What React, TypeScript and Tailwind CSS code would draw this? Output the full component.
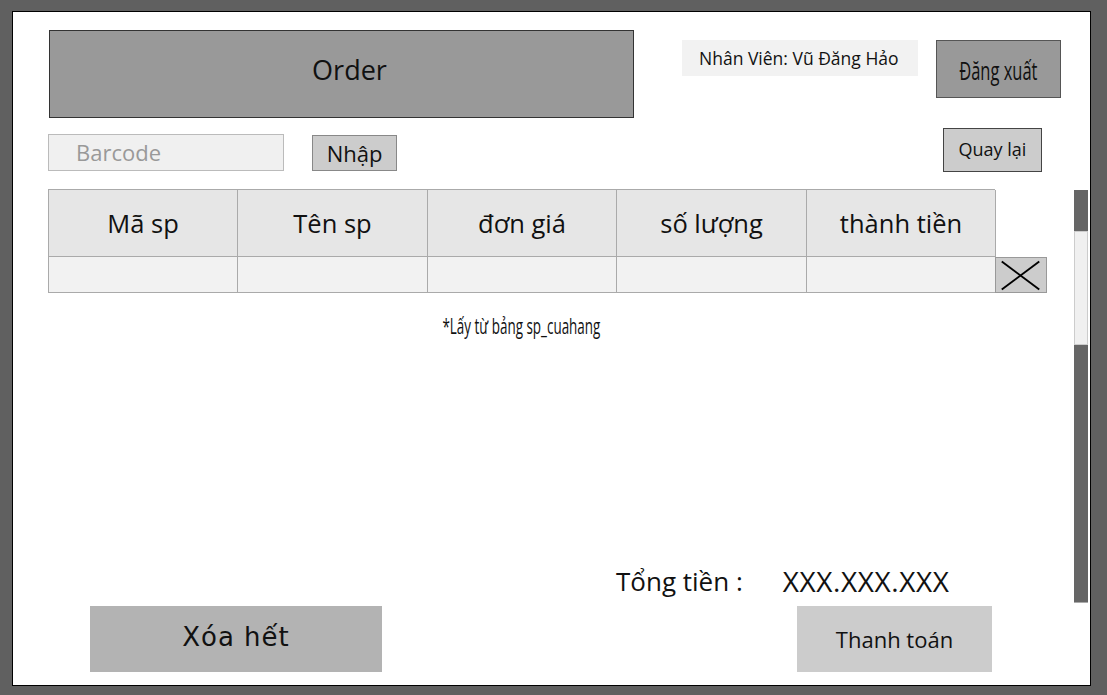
const font = { fontFamily: '"Open Sans", "Noto Sans", sans-serif' };

function XIcon() {
  return (
    <svg width="52" height="36" viewBox="0 0 52 36">
      <line x1="6" y1="4" x2="45" y2="33" stroke="#000" strokeWidth="2" />
      <line x1="45" y1="4" x2="6" y2="33" stroke="#000" strokeWidth="2" />
    </svg>
  );
}

const headers = ["Mã sp", "Tên sp", "đơn giá", "số lượng", "thành tiền"];

export default function App() {
  return (
    <div className="w-full h-[695px] bg-[#606060] pt-[11px] pl-[12px] text-[#111]" style={font}>
      <div className="w-[1079px] h-[675px] border border-black bg-white flex flex-col">
        {/* top */}
        <div className="flex items-start mt-[18px]">
          <div className="ml-[36px] w-[585px] h-[88px] bg-[#999] border border-[#333] flex items-center justify-center pl-[16px] pb-[8px] text-[27px]">
            Order
          </div>
          <div className="ml-[48px] mt-[10px] w-[236px] h-[36px] bg-[#f2f2f2] flex items-center pl-[17px] text-[17.5px] whitespace-nowrap">
            Nhân Viên: Vũ Đăng Hảo
          </div>
          <button className="ml-[18px] mt-[10px] w-[125px] h-[58px] bg-[#999] border border-[#555] flex items-center justify-center pt-[3px]">
            <span className="inline-block scale-x-[0.66] text-[25px] whitespace-nowrap">Đăng xuất</span>
          </button>
        </div>

        {/* barcode row */}
        <div className="flex items-start mt-[10px]">
          <div className="ml-[35px] mt-[6px] w-[236px] h-[37px] bg-[#f0f0f0] border border-[#bbb] flex items-center pl-[27px] text-[22px] text-[#999]">
            Barcode
          </div>
          <button className="ml-[28px] mt-[7px] w-[85px] h-[36px] bg-[#ccc] border border-[#888] flex items-center justify-center text-[22px]">
            Nhập
          </button>
          <button className="ml-auto mr-[48px] w-[99px] h-[44px] bg-[#ccc] border border-[#444] flex items-center justify-center text-[18px] pb-[2px]">
            Quay lại
          </button>
        </div>

        {/* table area + scrollbar */}
        <div className="flex mt-[17px] h-[414px]">
          <div className="ml-[35px] flex flex-col">
            <div className="w-[947px] grid grid-cols-[189px_190px_189px_190px_189px] border-t border-l border-[#aaa]">
              {headers.map((h) => (
                <div key={h} className="h-[67px] bg-[#e6e6e6] border-r border-b border-[#aaa] flex items-center justify-center text-[25.5px]">
                  {h}
                </div>
              ))}
            </div>
            <div className="flex">
              <div className="w-[947px] grid grid-cols-[189px_190px_189px_190px_189px] border-l border-[#aaa]">
                {headers.map((h) => (
                  <div key={h} className="h-[36px] bg-[#f2f2f2] border-r border-b border-[#aaa]" />
                ))}
              </div>
              <button className="w-[52px] h-[36px] bg-[#ccc] border border-[#999] flex items-center justify-center">
                <XIcon />
              </button>
            </div>
            <div className="w-[947px] mt-[18px] flex justify-center">
              <span className="inline-block scale-x-[0.64] text-[21px] whitespace-nowrap">*Lấy từ bảng sp_cuahang</span>
            </div>
            <div className="mt-auto mb-[6px] ml-[568px] flex items-center h-[32px] text-[26px] whitespace-nowrap">
              <span>Tổng tiền :</span>
              <span className="ml-[40px] text-[28px] tracking-[0.6px]">XXX.XXX.XXX</span>
            </div>
          </div>
          <div className="ml-auto mr-[2px] mt-[1px] w-[14px] h-[413px] flex flex-col">
            <div className="h-[41px] bg-[#666]" />
            <div className="h-[114px] bg-[#f0f0f0] border border-[#ccc]" />
            <div className="flex-1 bg-[#666] border-b border-[#aaa]" />
          </div>
        </div>

        {/* bottom buttons */}
        <div className="flex mt-[3px]">
          <button className="ml-[77px] w-[292px] h-[66px] bg-[#b3b3b3] flex items-center justify-center text-[26px] tracking-[1px] pb-[4px]" style={{ fontFamily: '"DejaVu Sans", sans-serif' }}>
            Xóa hết
          </button>
          <button className="ml-[415px] w-[195px] h-[66px] bg-[#ccc] flex items-center justify-center text-[22px]">
            Thanh toán
          </button>
        </div>
      </div>
    </div>
  );
}
